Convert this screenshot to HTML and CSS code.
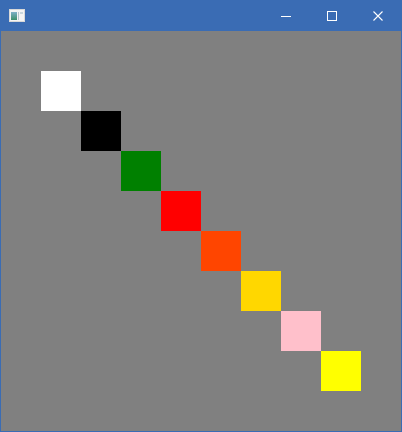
FILE: index.html
```html
<!DOCTYPE html>
<html>
<head>
<meta charset="utf-8">
<link rel="stylesheet" href="styles.css">
</head>
<body>
<div class="window">
  <div class="titlebar">
    <div class="app-icon">
      <svg width="16" height="13" viewBox="0 0 16 13">
        <defs>
          <linearGradient id="g" x1="0" y1="0" x2="0" y2="1">
            <stop offset="0" stop-color="#7fb0c8"/>
            <stop offset="1" stop-color="#3e8f6a"/>
          </linearGradient>
        </defs>
        <rect x="0.5" y="0.5" width="15" height="12" fill="#f4f4f4" stroke="#d8d8d8"/>
        <rect x="2" y="3" width="6" height="8" fill="url(#g)"/>
        <rect x="9" y="3" width="1" height="8" fill="#b8c4cc"/>
        <rect x="11" y="3" width="3" height="2" fill="#c9d6dc"/>
      </svg>
    </div>
    <div class="spacer"></div>
    <div class="btn">
      <svg width="10" height="10" viewBox="0 0 10 10"><rect x="0" y="5" width="10" height="1" fill="#fff"/></svg>
    </div>
    <div class="btn">
      <svg width="10" height="10" viewBox="0 0 10 10"><rect x="0.5" y="0.5" width="9" height="9" fill="none" stroke="#fff"/></svg>
    </div>
    <div class="btn">
      <svg width="10" height="10" viewBox="0 0 10 10"><path d="M0.5 0.5 L9.5 9.5 M9.5 0.5 L0.5 9.5" stroke="#fff" stroke-width="1.1"/></svg>
    </div>
  </div>
  <div class="client">
    <div class="sq c1"></div>
    <div class="sq c2"></div>
    <div class="sq c3"></div>
    <div class="sq c4"></div>
    <div class="sq c5"></div>
    <div class="sq c6"></div>
    <div class="sq c7"></div>
    <div class="sq c8"></div>
  </div>
</div>
</body>
</html>
```
FILE: styles.css
```css
html, body {
  margin: 0;
  padding: 0;
  background: #3a6cb4;
}
.window {
  width: 402px;
  height: 432px;
  display: flex;
  flex-direction: column;
  background: #3a6cb4;
}
.titlebar {
  height: 31px;
  display: flex;
  align-items: stretch;
  padding-right: 1px;
}
.app-icon {
  width: 16px;
  padding: 9px 0 0 9px;
}
.app-icon svg {
  display: block;
}
.spacer {
  flex: 1;
}
.btn {
  width: 46px;
  display: flex;
  align-items: center;
  justify-content: center;
}
.btn svg {
  display: block;
}
.client {
  margin: 0 1px 1px 1px;
  height: 400px;
  background: #808080;
  box-sizing: border-box;
  padding: 40px;
  display: grid;
  grid-template-columns: repeat(8, 40px);
  grid-template-rows: repeat(8, 40px);
  align-content: start;
}
.c1 { grid-area: 1 / 1; background: #ffffff; }
.c2 { grid-area: 2 / 2; background: #000000; }
.c3 { grid-area: 3 / 3; background: #008000; }
.c4 { grid-area: 4 / 4; background: #ff0000; }
.c5 { grid-area: 5 / 5; background: #ff4500; }
.c6 { grid-area: 6 / 6; background: #ffd700; }
.c7 { grid-area: 7 / 7; background: #ffc0cb; }
.c8 { grid-area: 8 / 8; background: #ffff00; }
```
